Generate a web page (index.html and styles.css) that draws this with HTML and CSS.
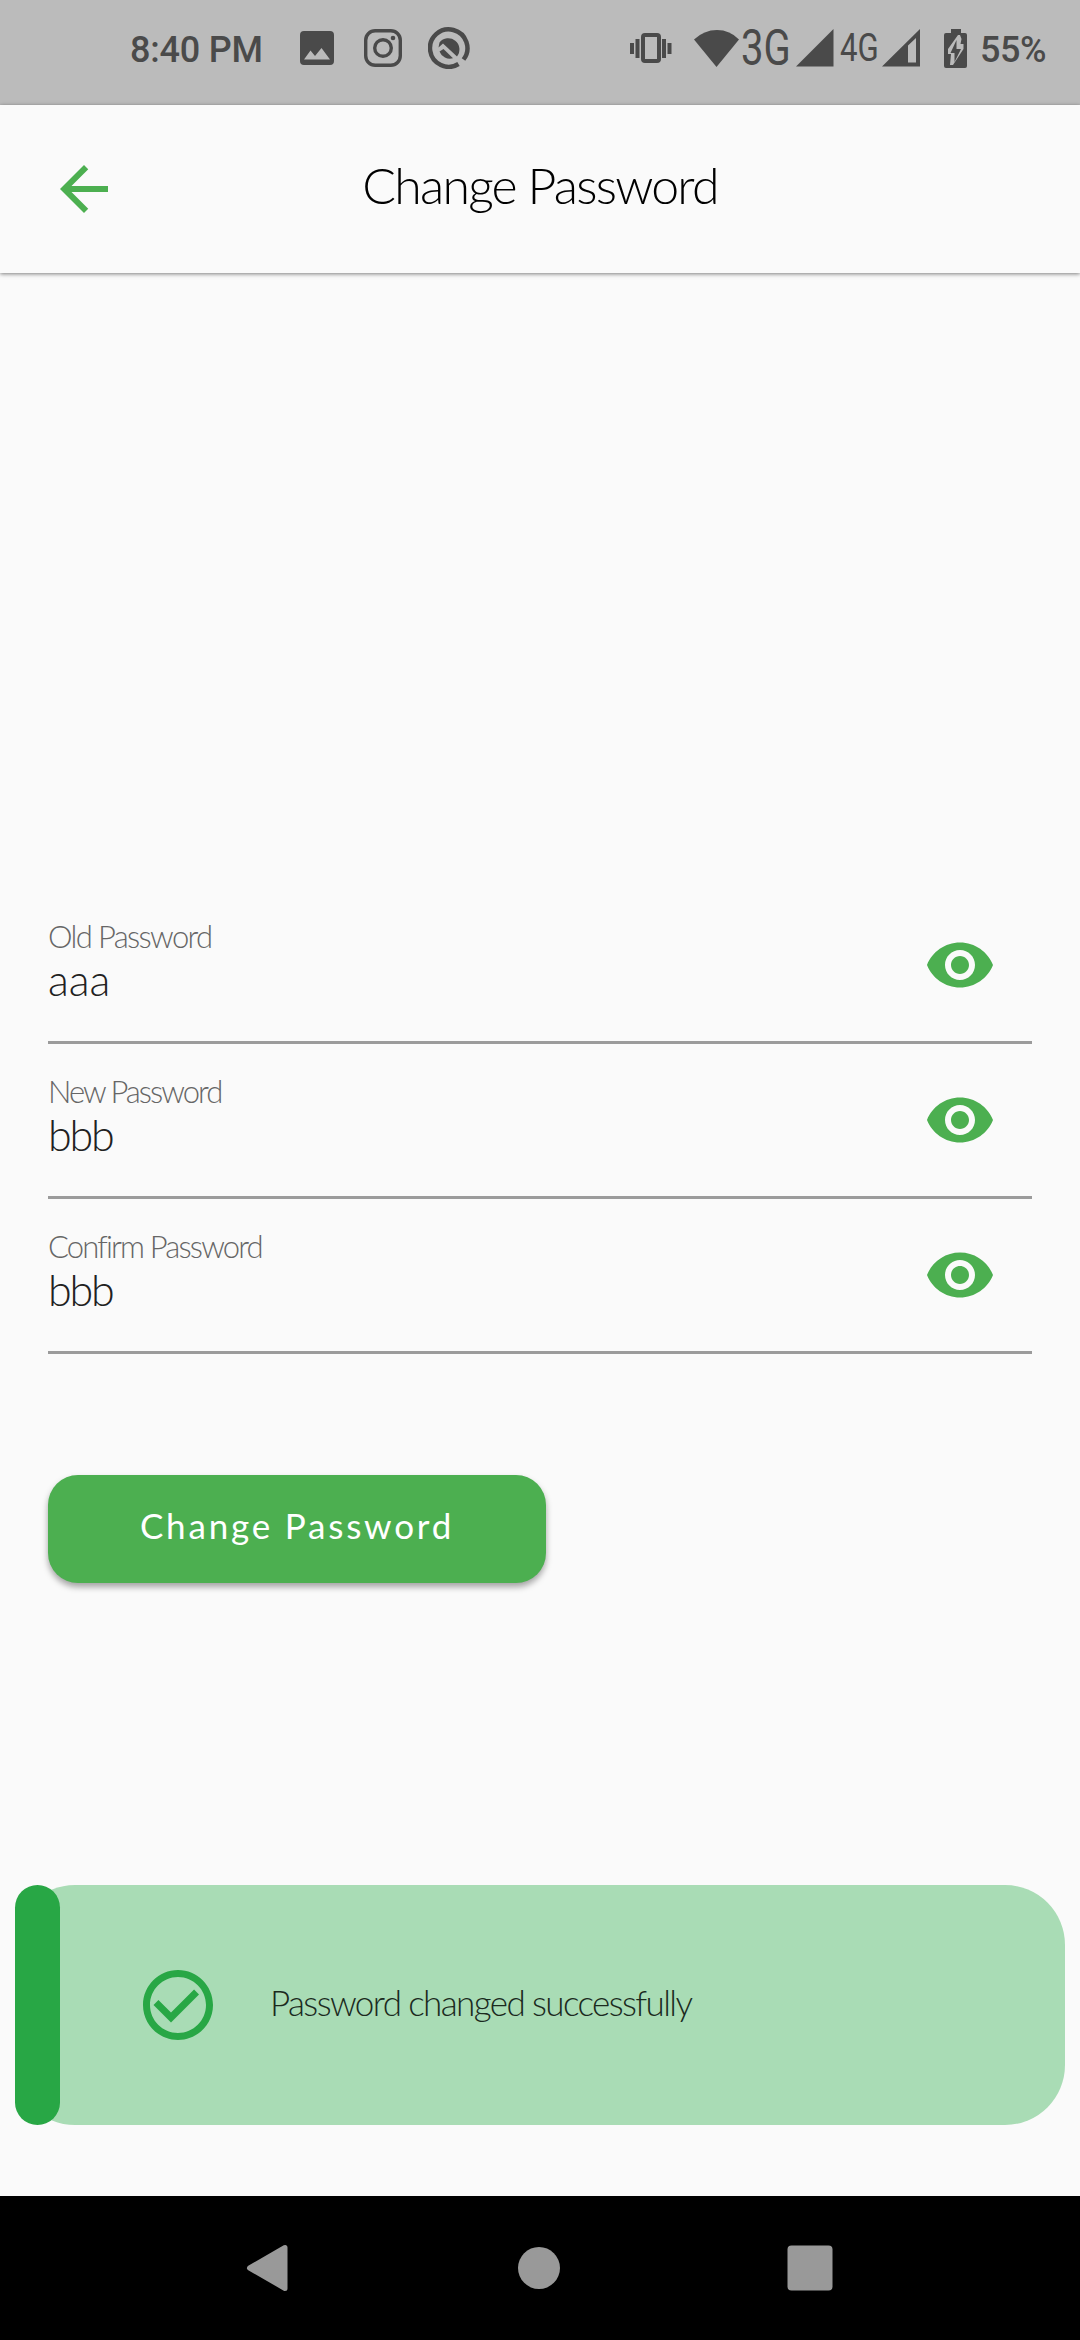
FILE: index.html
```html
<!DOCTYPE html>
<html lang="en">
<head>
<meta charset="utf-8">
<title>Change Password</title>
<link rel="stylesheet" href="styles.css">
</head>
<body>
<div class="screen">
  <div class="status">
    <span class="time">8:40 PM</span>
    <svg class="image" width="34" height="34" viewBox="0 0 34 34"><path fill-rule="evenodd" d="M4 0h26q4 0 4 4v26q0 4-4 4H4q-4 0-4-4V4q0-4 4-4ZM4 28.500h26l-8.500-11.500-6.500 8-4.500-5.500Z"/></svg>
    <svg class="insta" width="38" height="38" viewBox="0 0 38 38"><rect x="1.700" y="1.700" width="34.600" height="34.600" rx="9.500" fill="none" stroke="#4a4a4a" stroke-width="3.400"/><circle cx="19" cy="19" r="8.300" fill="none" stroke="#4a4a4a" stroke-width="3.400"/><circle cx="29" cy="9" r="2.300"/></svg>
    <svg class="q" width="42" height="42" viewBox="0 0 42 42"><path d="M30.500 37A18.700 18.700 0 1 1 35.500 32.500" fill="none" stroke="#4a4a4a" stroke-width="4.500"/><path d="M11.500 15.500A11 11 0 1 1 29 29.500L15 16.500 10.500 20.500Z"/><path d="M11.500 24.500l4-2.500L25 31.300A11 11 0 0 1 11.500 24.500Z"/></svg>
    <span class="spacer"></span>
    <svg class="vibrate" width="42" height="30" viewBox="0 0 42 30"><rect x="13" y="2" width="16" height="26" rx="2" fill="none" stroke="#4a4a4a" stroke-width="4"/><path d="M0 10h4v11H0ZM5.500 6h4v19h-4ZM32 6h4v19h-4ZM37.500 10h4v11h-4Z"/></svg>
    <svg class="wifi" width="46" height="38" viewBox="0 0 46 38"><path d="M0 10.500Q10 1 23 1T45 10.500L22.500 38Z"/></svg>
    <span class="net net3"><span>3G</span></span>
    <svg class="sig1" width="38" height="38" viewBox="0 0 38 38"><path d="M37.500 0v37.500H0Z"/></svg>
    <span class="net net4"><span>4G</span></span>
    <svg class="sig2" width="38" height="38" viewBox="0 0 38 38"><path fill-rule="evenodd" d="M38 0v37.500H0ZM34 9l-8 7.500v17h8Z"/></svg>
    <svg class="battery" width="24" height="39" viewBox="0 0 24 39"><path fill-rule="evenodd" d="M7 0h10v4h4q2 0 2 2v31q0 2-2 2H2q-2 0-2-2V6q0-2 2-2h5ZM14 6L4 20v5h3l-1 11h3L19.500 20V15h-3l1-5L16 6ZM12.500 11v9H17L10.500 33V24H6.500Z"/></svg>
    <span class="pct">55%</span>
  </div>
  <header class="appbar">
    <svg class="back" width="72" height="72" viewBox="0 0 24 24"><path d="M20 11H7.830l5.590-5.590L12 4l-8 8 8 8 1.410-1.410L7.830 13H20v-2z"/></svg>
    <h1 class="title">Change Password</h1>
  </header>
  <main class="content">
    <div class="field">
      <div class="texts"><div class="label l-old">Old Password</div><div class="value">aaa</div></div>
      <svg class="eye" width="72" height="72" viewBox="0 0 24 24"><path d="M12 4.500C7 4.500 2.730 7.610 1 12c1.730 4.390 6 7.500 11 7.500s9.270-3.110 11-7.500c-1.730-4.390-6-7.500-11-7.500zM12 17c-2.760 0-5-2.240-5-5s2.240-5 5-5 5 2.240 5 5-2.240 5-5 5zm0-8c-1.660 0-3 1.340-3 3s1.340 3 3 3 3-1.340 3-3-1.340-3-3-3z"/></svg>
    </div>
    <div class="field">
      <div class="texts"><div class="label l-new">New Password</div><div class="value narrow">bbb</div></div>
      <svg class="eye" width="72" height="72" viewBox="0 0 24 24"><path d="M12 4.500C7 4.500 2.730 7.610 1 12c1.730 4.390 6 7.500 11 7.500s9.270-3.110 11-7.500c-1.730-4.390-6-7.500-11-7.500zM12 17c-2.760 0-5-2.240-5-5s2.240-5 5-5 5 2.240 5 5-2.240 5-5 5zm0-8c-1.660 0-3 1.340-3 3s1.340 3 3 3 3-1.340 3-3-1.340-3-3-3z"/></svg>
    </div>
    <div class="field">
      <div class="texts"><div class="label l-confirm">Confirm Password</div><div class="value narrow">bbb</div></div>
      <svg class="eye" width="72" height="72" viewBox="0 0 24 24"><path d="M12 4.500C7 4.500 2.730 7.610 1 12c1.730 4.390 6 7.500 11 7.500s9.270-3.110 11-7.500c-1.730-4.390-6-7.500-11-7.500zM12 17c-2.760 0-5-2.240-5-5s2.240-5 5-5 5 2.240 5 5-2.240 5-5 5zm0-8c-1.660 0-3 1.340-3 3s1.340 3 3 3 3-1.340 3-3-1.340-3-3-3z"/></svg>
    </div>
    <button class="submit">Change Password</button>
  </main>
  <div class="toast">
    <div class="accent"></div>
    <svg class="check" width="84" height="84" viewBox="0 0 24 24"><path d="M16.590 7.580L10 14.170l-3.590-3.580L5 12l5 5 8-8zM12 2C6.480 2 2 6.480 2 12s4.480 10 10 10 10-4.480 10-10S17.520 2 12 2zm0 18c-4.420 0-8-3.580-8-8s3.580-8 8-8 8 3.580 8 8-3.580 8-8 8z"/></svg>
    <span class="message">Password changed successfully</span>
  </div>
  <nav class="nav">
    <svg width="48" height="50" viewBox="0 0 48 50"><path d="M42 4.500v41L6.500 25Z" fill="#999" stroke="#999" stroke-width="5" stroke-linejoin="round"/></svg>
    <svg width="42" height="42" viewBox="0 0 42 42"><circle cx="21" cy="21" r="21" fill="#999"/></svg>
    <svg width="46" height="46" viewBox="0 0 46 46"><rect x=".5" y=".5" width="45" height="45" rx="4" fill="#999"/></svg>
  </nav>
</div>
</body>
</html>
```
FILE: styles.css
```css
* { box-sizing: border-box; }
body { margin: 0; background: #fafafa; }
svg { display: block; flex: none; }
.screen {
  width: 1080px;
  height: 2340px;
  display: flex;
  flex-direction: column;
  font-family: Lato, "Open Sans", sans-serif;
  font-weight: 300;
  background: #fafafa;
}
.status {
  height: 105px;
  padding: 0 35px 9px 130px;
  display: flex;
  align-items: center;
  background: #bbb;
  color: #4a4a4a;
  fill: #4a4a4a;
  font-family: Roboto, sans-serif;
}
.time, .pct { font-size: 36px; font-weight: 500; line-height: 48px; white-space: nowrap; margin-top: 3px; }
.time { width: 170px; letter-spacing: -.2px; }
.pct { width: 65px; letter-spacing: -.4px; }
.net { flex: none; font-weight: 400; }
.net span { display: block; width: max-content; transform-origin: 0 50%; }
.net3 { width: 52px; margin-left: 1px; font-size: 50px; line-height: 64px; }
.net3 span { transform: scaleX(.8); }
.net4 { width: 41px; margin-left: 6px; font-size: 38px; line-height: 50px; }
.net4 span { transform: scaleX(.82); }
.insta { margin-left: 30px; }
.q { margin-left: 26px; }
.spacer { flex: 1; }
.wifi { margin-left: 22px; }
.sig1 { margin-left: 3px; }
.sig2 { margin-left: 1px; }
.battery { margin: 0 12px 0 24px; }
.appbar {
  height: 168px;
  padding: 0 48px;
  display: grid;
  grid-template-columns: 72px 1fr 72px;
  align-items: center;
  box-shadow: 0 1px 4px rgba(0, 0, 0, .5);
}
.back, .eye { fill: #4caf50; }
.title {
  margin: 0 0 8px;
  font-size: 50px;
  font-weight: 300;
  line-height: 60px;
  letter-spacing: -1.8px;
  text-align: center;
  white-space: nowrap;
  color: #000;
}
.content { flex: none; height: 1612px; padding: 616px 48px 0; }
.field {
  height: 155px;
  padding: 26px 36px 0 0;
  display: flex;
  align-items: flex-start;
  border-bottom: 3px solid #9b9b9b;
}
.texts { flex: 1; }
.label { font-size: 31px; line-height: 42px; color: #666; white-space: nowrap; }
.l-old { letter-spacing: -1.65px; }
.l-new { letter-spacing: -2px; }
.l-confirm { letter-spacing: -1.85px; }
.value { font-size: 43px; line-height: 46px; color: #212121; }
.narrow { letter-spacing: -2.2px; }
.eye { margin-top: 14px; }
.submit {
  display: block;
  width: 498px;
  height: 108px;
  margin-top: 121px;
  padding: 0 0 8px;
  border: 0;
  border-radius: 30px;
  background: #4caf50;
  color: #fff;
  font: 400 35px/44px Lato, sans-serif;
  letter-spacing: 2.8px;
  white-space: nowrap;
  box-shadow: 0 4px 6px rgba(0, 0, 0, .35);
}
.toast {
  height: 240px;
  margin: 0 15px;
  display: flex;
  align-items: center;
  border-radius: 60px;
  background: #a9dcb5;
}
.accent { width: 45px; height: 240px; border-radius: 23px; background: #28a745; }
.check { margin-left: 76px; fill: #28a745; }
.message {
  margin: 0 0 7px 50px;
  font-size: 35px;
  line-height: 44px;
  letter-spacing: -1.6px;
  color: #1b2a1e;
  white-space: nowrap;
}
.nav {
  height: 144px;
  margin-top: auto;
  padding: 0 247px 0 243px;
  display: flex;
  align-items: center;
  justify-content: space-between;
  background: #000;
}
```
